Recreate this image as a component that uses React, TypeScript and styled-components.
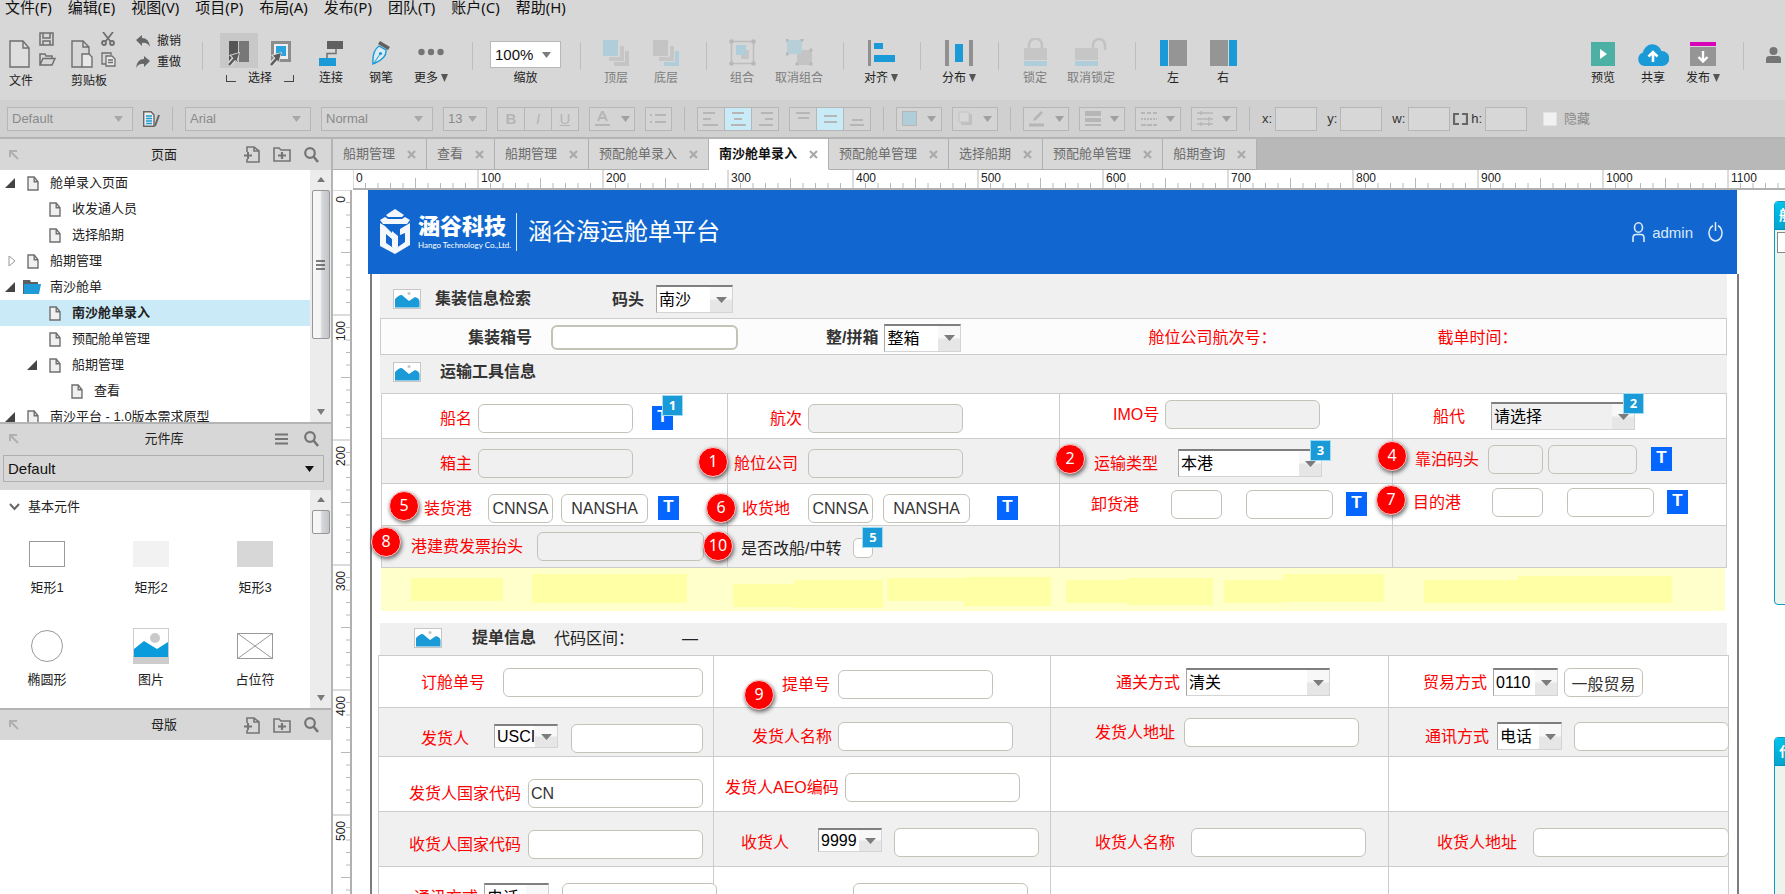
import React, { useLayoutEffect, useRef, useState } from "react";
import styled, { createGlobalStyle } from "styled-components";

const uiFont = `"Noto Sans", "Noto Sans CJK SC", sans-serif`;
const formFont = `"Liberation Sans", "Noto Sans CJK SC", sans-serif`;

const Global = createGlobalStyle`
  *, *::before, *::after { box-sizing: border-box; }
  html, body { margin: 0; height: 100%; overflow: hidden; }
  #root { height: 100%; }
  body { font-family: ${formFont}; color: #222; background: #fff; }
  button, input, select { font: inherit; color: inherit; }
  button { padding: 0; border: 0; background: none; cursor: pointer; }
  svg { display: block; flex: none; }
`;

/* ---------- application frame ---------- */

const Frame = styled.div`
  height: 100vh;
  display: flex;
  flex-direction: column;
  overflow: hidden;
`;

const MenuBar = styled.nav`
  flex: none;
  display: flex;
  align-items: flex-start;
  gap: 16px;
  height: 16px;
  padding-left: 5px;
  background: #d7d7d7;
  color: #111;
  font: 15px/15px ${uiFont};
  white-space: nowrap;

  button { line-height: 15px; }
`;

const ToolBar = styled.div`
  flex: none;
  display: flex;
  height: 84px;
  padding: 17px 4px 0 0;
  background: #d7d7d7;
  color: #222;
  font: 12px/16px ${formFont};
  white-space: nowrap;
`;

const Tool = styled.button<{ $w?: number; $before?: number; $dim?: boolean }>`
  display: flex;
  flex-direction: column;
  align-items: center;
  gap: 2px;
  flex: none;
  width: ${(p) => p.$w ?? 50}px;
  height: 53px;
  margin-left: ${(p) => p.$before ?? 0}px;
  color: ${(p) => (p.$dim ? "#7c7c7c" : "#222")};
`;

const IconBox = styled.span`
  display: flex;
  align-items: flex-end;
  justify-content: center;
  height: 35px;
  padding-bottom: 2px;
`;

const ToolText = styled.span`
  display: flex;
  align-items: center;
  gap: 3px;
`;

const Divider = styled.i<{ $before: number; $after: number }>`
  flex: none;
  width: 1px;
  height: 28px;
  margin: 9px ${(p) => p.$after}px 0 ${(p) => p.$before}px;
  background: #bdbdbd;
`;

const FileGroup = styled.div<{ $before: number; $w: number }>`
  flex: none;
  display: grid;
  grid-template-columns: 24px auto;
  grid-template-rows: 12px 22px 16px;
  align-content: start;
  justify-items: start;
  column-gap: 6px;
  row-gap: 3px;
  width: ${(p) => p.$w}px;
  margin-left: ${(p) => p.$before}px;

  > button:first-child { grid-row: 1 / 3; display: flex; padding-top: 5px; }
  > button { display: flex; align-items: center; }
  > span { grid-column: 1 / 3; }
`;

const History = styled.div`
  flex: none;
  display: flex;
  flex-direction: column;
  gap: 5px;
  width: 66px;

  button { display: flex; align-items: center; gap: 7px; }
`;

const SelectTools = styled.div`
  flex: none;
  display: grid;
  grid-template-columns: 38px 38px;
  align-content: start;
  column-gap: 4px;
  row-gap: 2px;
  margin-right: 6px;
  justify-items: center;

  > div { grid-column: 1 / 3; display: flex; align-items: center; gap: 12px; }
`;

const PointerButton = styled.button<{ $on?: boolean }>`
  display: flex;
  align-items: flex-end;
  justify-content: center;
  width: 38px;
  height: 35px;
  padding-bottom: 2px;
  background: ${(p) => (p.$on ? "#c8c8c8" : "none")};
`;

const Bracket = styled.i<{ $right?: boolean }>`
  width: 10px;
  height: 7px;
  border-bottom: 1px solid #444;
  ${(p) => (p.$right ? "border-right" : "border-left")}: 1px solid #444;
`;

const ZoomBlock = styled.label`
  display: flex;
  flex-direction: column;
  align-items: center;
  gap: 2px;
  width: 71px;
  padding-top: 8px;
`;

const Spacer = styled.span`
  flex: 1;
`;

/* ---------- style bar ---------- */

const StyleBar = styled.div`
  flex: none;
  display: flex;
  align-items: center;
  gap: 10px;
  height: 39px;
  padding-left: 7px;
  background: #d0d0d0;
  border-bottom: 2px solid #b4b4b4;
  color: #8a8a8a;
  font: 13px/16px ${formFont};
`;

const BarPick = styled.span<{ $w: number; $h?: number; $line?: string; $bg?: string; $fg?: string; $size?: number }>`
  flex: none;
  display: grid;
  grid-template-columns: 1fr 18px;
  align-items: center;
  width: ${(p) => p.$w}px;
  height: ${(p) => p.$h ?? 24}px;
  border: 1px solid ${(p) => p.$line ?? "#b6b6b6"};
  background: ${(p) => p.$bg ?? "#d4d4d4"};
  color: ${(p) => p.$fg ?? "#8a8a8a"};
  font-size: ${(p) => p.$size ?? 13}px;

  select {
    grid-area: 1 / 1 / 2 / 3;
    width: 100%;
    height: 100%;
    padding: 0 4px;
    appearance: none;
    border: 0;
    background: none;
  }
  svg { grid-area: 1 / 2; pointer-events: none; }
`;

const BarButton = styled.button<{ $w?: number; $on?: boolean }>`
  flex: none;
  display: flex;
  align-items: center;
  justify-content: space-around;
  width: ${(p) => p.$w ?? 27}px;
  height: 24px;
  border: 1px solid #b6b6b6;
  background: ${(p) => (p.$on ? "#c9ebf8" : "#d4d4d4")};
  color: #b4b4b4;
`;

const Joined = styled.span`
  flex: none;
  display: flex;
  button { width: 28px; }
  button + button { margin-left: -1px; }
  b, i, u { font-size: 15px; font-family: ${formFont}; }
`;

const Tick = styled.i`
  flex: none;
  width: 1px;
  height: 24px;
  margin: 0 2px;
  background: #b8b8b8;
`;

const Coord = styled.label`
  flex: none;
  display: flex;
  align-items: center;
  gap: 3px;
  color: #333;

  input {
    width: 42px;
    height: 24px;
    border: 1px solid #b6b6b6;
    background: #d7d7d7;
  }
`;

const HideBox = styled.label`
  display: flex;
  align-items: center;
  gap: 7px;
  margin-left: 6px;
  white-space: nowrap;

  input {
    appearance: none;
    width: 14px;
    height: 14px;
    margin: 0;
    background: #f1f1f1;
    border: 1px solid #e2e2e2;
  }
`;

/* ---------- left side ---------- */

const Workspace = styled.div`
  flex: 1;
  min-height: 0;
  display: flex;
`;

const Side = styled.aside`
  flex: none;
  display: flex;
  flex-direction: column;
  width: 333px;
  border-right: 2px solid #b4b4b4;
  background: #fff;
  font: 13px/26px ${formFont};
`;

const PaneHead = styled.header<{ $line?: boolean }>`
  flex: none;
  display: grid;
  grid-template-columns: 77px 1fr 77px;
  align-items: center;
  height: ${(p) => (p.$line ? 32 : 31)}px;
  padding: 0 12px 0 9px;
  border-top: ${(p) => (p.$line ? "2px solid #b4b4b4" : "0")};
  background: #d7d7d7;

  h2 { margin: 0; font-size: 13px; font-weight: 400; text-align: center; }
  > div { display: flex; align-items: center; justify-content: flex-end; gap: 13px; }
`;

const Scroller = styled.div<{ $h: number }>`
  flex: none;
  display: flex;
  height: ${(p) => p.$h}px;
  overflow: hidden;
`;

const Tree = styled.ul`
  flex: 1;
  margin: 0;
  padding: 0;
  list-style: none;
`;

const TreeRow = styled.li<{ $level: number; $on?: boolean }>`
  display: grid;
  grid-template-columns: 22px 23px 1fr;
  align-items: center;
  height: 26px;
  padding-left: ${(p) => 5 + p.$level * 22}px;
  background: ${(p) => (p.$on ? "#cbeaf8" : "none")};
  font-weight: ${(p) => (p.$on ? 700 : 400)};
  color: #222;

  span { white-space: nowrap; }
  svg.folder { margin-left: -4px; }
`;

const Bar = styled.div`
  flex: none;
  display: flex;
  flex-direction: column;
  align-items: center;
  width: 21px;
  padding: 7px 0;
  background: #ececec;
  gap: 8px;
`;

const Thumb = styled.i<{ $h: number }>`
  display: flex;
  align-items: center;
  justify-content: center;
  width: 18px;
  height: ${(p) => p.$h}px;
  border: 1px solid #979797;
  border-radius: 2px;
  background: linear-gradient(90deg, #f6f6f6 0 45%, #d6d7da 55%, #c3c4c8);
`;

const LibraryPick = styled.div`
  flex: none;
  height: 36px;
  padding: 1px 7px 8px 3px;
  background: #d7d7d7;
`;

const Library = styled.div`
  flex: 1;
  h3 { display: flex; align-items: center; gap: 8px; height: 34px; margin: 0; padding-left: 9px; font-size: 13px; font-weight: 400; }
`;

const Shapes = styled.div`
  display: grid;
  grid-template-columns: repeat(3, 90px);
  grid-auto-rows: 92px;
  column-gap: 14px;
  padding-left: 2px;
`;

const Shape = styled.button`
  display: flex;
  flex-direction: column;
  align-items: center;
  line-height: 20px;
  > span { display: flex; align-items: center; height: 54px; padding-top: 6px; }
`;

/* ---------- canvas side ---------- */

const Editor = styled.main`
  flex: 1;
  min-width: 0;
  display: flex;
  flex-direction: column;
`;

const Tabs = styled.div`
  flex: none;
  display: flex;
  height: 31px;
  background: #b8b8b8;
  overflow: hidden;
`;

const Tab = styled.div<{ $on?: boolean }>`
  flex: none;
  display: flex;
  align-items: center;
  gap: 12px;
  padding: 0 10px;
  border-right: 1px solid #b0b0b0;
  border-bottom: 1px solid ${(p) => (p.$on ? "#fff" : "#b0b0b0")};
  background: ${(p) => (p.$on ? "#fff" : "#d7d7d7")};
  color: ${(p) => (p.$on ? "#111" : "#6c6c6c")};
  font: ${(p) => (p.$on ? 700 : 400)} 13px/20px ${formFont};
`;

const CanvasGrid = styled.div`
  flex: 1;
  min-height: 0;
  display: grid;
  grid-template: 20px minmax(0, 1fr) / 20px minmax(0, 1fr);
  background: #fff;
  > svg { width: 100%; height: 100%; overflow: hidden; }
`;

const Canvas = styled.div`
  display: flex;
  align-items: flex-start;
  padding-left: 15px;
  overflow: hidden;
`;

const Board = styled.section`
  flex: 1;
  min-width: 1200px;
`;

const Banner = styled.header`
  display: flex;
  align-items: center;
  height: 84px;
  margin-right: 2px;
  padding: 0 14px 0 12px;
  background: #1167cf;
  color: #fff;
`;

const Brand = styled.div`
  display: flex;
  flex-direction: column;
  margin-left: 8px;
  width: 90px;
  white-space: nowrap;
  strong { font-size: 22px; line-height: 26px; font-weight: 900; }
  small { font: 8px/10px "Lato", sans-serif; }
`;

const Product = styled.h1`
  margin: 0 auto 0 8px;
  padding-left: 11px;
  border-left: 1px solid #dbe8f8;
  font-size: 24px;
  line-height: 38px;
  font-weight: 400;
`;

const Account = styled.div`
  display: flex;
  align-items: center;
  gap: 7px;
  font-size: 15px;
  color: #dceafb;
  button { margin-left: 8px; }
`;

const BoardBody = styled.div`
  margin-left: 2px;
  padding: 0 8px 0 6px;
  border: solid #7c7c7c;
  border-width: 0 2px;
  height: 760px;
`;

const Band = styled.div<{ $h: number; $left: number; $boxed?: boolean; $down?: number; $up?: number }>`
  display: flex;
  align-items: center;
  height: ${(p) => p.$h}px;
  margin: 0 2px;
  padding: ${(p) => p.$down ?? 0}px 0 ${(p) => p.$up ?? 0}px ${(p) => p.$left}px;
  background: ${(p) => (p.$boxed ? "#fcfcfc" : "#f0f0f0")};
  border: ${(p) => (p.$boxed ? "1px solid #ccc" : "0")};
  font-size: 16px;
  color: #333;
  white-space: nowrap;
`;

const BandTitle = styled.h2<{ $gap: number }>`
  margin: 0 0 0 ${(p) => p.$gap}px;
  font-size: 16px;
  line-height: 24px;
  font-weight: 700;
`;

const FormGrid = styled.div<{ $cols: number[]; $inset: string }>`
  display: grid;
  grid-template-columns: ${(p) => p.$cols.map((c) => `minmax(0, ${c}fr)`).join(" ")};
  margin: ${(p) => p.$inset};
  border: solid #ccc;
  border-width: 1px 0 0 1px;
`;

const Cell = styled.div<{ $h: number; $left?: number; $top?: number; $shade?: boolean }>`
  position: relative;
  display: flex;
  align-items: flex-start;
  height: ${(p) => p.$h}px;
  padding-left: ${(p) => p.$left ?? 0}px;
  padding-top: ${(p) => p.$top ?? 0}px;
  border: solid #ccc;
  border-width: 0 1px 1px 0;
  background: ${(p) => (p.$shade ? "#f0f0f0" : "#fff")};
`;

const Label = styled.label<{ $gap?: number; $dark?: boolean; $bold?: boolean }>`
  flex: none;
  margin-left: ${(p) => p.$gap ?? 0}px;
  font-size: 16px;
  line-height: 29px;
  font-weight: ${(p) => (p.$bold ? 700 : 400)};
  color: ${(p) => (p.$bold ? "#333" : p.$dark ? "#222" : "#fe0000")};
  white-space: nowrap;
`;

const Field = styled.input<{ $w: number; $gap?: number; $muted?: boolean; $center?: boolean; $strong?: boolean }>`
  flex: none;
  position: relative;
  z-index: 1;
  width: ${(p) => p.$w}px;
  height: ${(p) => (p.$strong ? 25 : 29)}px;
  margin-left: ${(p) => p.$gap ?? 0}px;
  padding: 0 2px;
  border: ${(p) => (p.$strong ? 2 : 1)}px solid #c3c3b8;
  border-radius: 6px;
  background: ${(p) => (p.$muted ? "#f0f0f0" : "#fff")};
  color: #333;
  font-size: 16px;
  text-align: ${(p) => (p.$center ? "center" : "left")};
`;

const CheckHolder = styled.span`
  flex: none;
  position: relative;
  display: flex;
  margin: 4px 0 0 12px;

  input {
    appearance: none;
    width: 20px;
    height: 20px;
    margin: 0;
    border: 1px solid #c3c3b8;
    border-radius: 5px;
    background: #fff;
  }
`;

const Drop = styled.span<{ $w: number; $h?: number; $gap?: number; $muted?: boolean }>`
  flex: none;
  position: relative;
  display: grid;
  grid-template-columns: 1fr 22px;
  width: ${(p) => p.$w}px;
  height: ${(p) => p.$h ?? 28}px;
  margin-left: ${(p) => p.$gap ?? 0}px;
  border: 1px solid #d4d4d4;
  border-top: 2px solid #7f7f7f;
  border-left-color: #a6a6a6;
  background: ${(p) => (p.$muted ? "#f0f0f0" : "#fff")};

  select {
    grid-area: 1 / 1 / 2 / 3;
    width: 100%;
    min-width: 0;
    padding: 0 2px;
    appearance: none;
    border: 0;
    background: none;
    font-size: 16px;
    color: #000;
  }
  > i {
    grid-area: 1 / 2;
    display: flex;
    align-items: center;
    justify-content: center;
    background: linear-gradient(#f8f8f8 0 45%, #e6e6e6 55%);
    pointer-events: none;
  }
`;

const TextMark = styled.span<{ $gap: number }>`
  flex: none;
  position: relative;
  width: 21px;
  height: 24px;
  margin: 2px 0 0 ${(p) => p.$gap}px;
  background: #0466ff;
  color: #fff;
  font: 700 17px/22px ${formFont};
  text-align: center;
`;

const Note = styled.span`
  position: absolute;
  top: -11px;
  right: -10px;
  z-index: 3;
  width: 21px;
  height: 21px;
  border: 1px solid #9fdcf3;
  background: #1a9ad6;
  color: #fff;
  font: 700 13px/19px ${uiFont};
  text-align: center;
`;

const Pin = styled.span<{ $x: number; $y: number }>`
  position: absolute;
  left: ${(p) => p.$x}px;
  top: ${(p) => p.$y}px;
  z-index: 4;
  width: 30px;
  height: 30px;
  border: 1px solid #ffc9c9;
  border-radius: 50%;
  background: #fe0000;
  box-shadow: 1px 2px 4px rgba(0, 0, 0, 0.6);
  color: #fff;
  font: 16px/27px ${uiFont};
  text-align: center;
`;

const YellowStrip = styled.div`
  display: flex;
  height: 43px;
  margin: 0 4px 12px 3px;
  padding-top: 6px;
  background: #ffffcc;
`;

const YellowPatch = styled.i<{ $w: number; $h: number; $gap: number; $top: number }>`
  flex: none;
  width: ${(p) => p.$w}px;
  height: ${(p) => p.$h}px;
  margin: ${(p) => p.$top}px 0 0 ${(p) => p.$gap}px;
  background: #ffffa6;
`;

const Offstage = styled.div`
  flex: none;
  width: 46px;
  padding: 11px 0 0 35px;
  overflow: hidden;
`;

const Dialog = styled.div<{ $h: number; $after?: number }>`
  width: 200px;
  height: ${(p) => p.$h}px;
  margin-bottom: ${(p) => p.$after ?? 0}px;
  border: 1px solid #0a9cc4;
  border-radius: 4px;
  background: #edf4ee;
  overflow: hidden;
  color: #fff;
  font: 700 14px/26px ${formFont};

  header { height: 28px; padding-left: 4px; background: linear-gradient(#00c4ec, #00a4cd); border-bottom: 1px solid #0090b8; }
  input { display: block; width: 160px; height: 21px; margin: 2px; border: 1px solid #888; background: #fff; }
  textarea { display: block; width: 160px; height: 60px; margin: 76px 0 0 10px; border: 2px solid #888; background: #d8ddd9; resize: none; }
`;

/* ---------- small drawings ---------- */

const Caret = ({ fill = "#7c7c7c", w = 9 }: { fill?: string; w?: number }) => (
  <svg width={w} height="6" viewBox="0 0 10 6" preserveAspectRatio="none"><path d="M0 0H10L5 6Z" fill={fill} /></svg>
);
const CaretUp = () => <svg width="8" height="5" viewBox="0 0 8 5"><path d="M0 5L4 0L8 5Z" fill="#777" /></svg>;

const TallCaret = () => <svg width="7" height="8" viewBox="0 0 7 8"><path d="M0 0H7L3.500 8Z" fill="#555" /></svg>;

const Page = ({ w = 12, h = 15 }: { w?: number; h?: number }) => (
  <svg width={w} height={h} viewBox={`0 0 ${w} ${h}`} fill="none" stroke="#6f6f6f" strokeWidth="1.4">
    <path d={`M1 1H${w * 0.6}L${w - 1} ${w * 0.4 + 1}V${h - 1}H1Z`} fill="#f0f0f0" />
    <path d={`M${w * 0.6} 1V${w * 0.4 + 1}H${w - 1}`} />
  </svg>
);

const NewDoc = () => (
  <svg width="21" height="28" viewBox="0 0 21 28" fill="none" stroke="#6f6f6f" strokeWidth="1.4">
    <path d="M1 1H14L20 8V27H1Z" fill="#dedede" /><path d="M14 1V8H20" />
  </svg>
);

const FolderIcon = () => (
  <svg className="folder" width="18" height="14" viewBox="0 0 18 14">
    <path d="M0 0H7L8 2H15V5H0Z" fill="#5f5f5f" /><path d="M0 4H2V14H0Z" fill="#5f5f5f" /><path d="M1 4H18L16 14H1Z" fill="#1f9bd7" />
  </svg>
);

const Corner = () => (
  <svg width="10" height="10" viewBox="0 0 10 10" fill="none" stroke="#b0b0b0" strokeWidth="2">
    <path d="M1 7V1H8M1 1L9 9" />
  </svg>
);
const AddPage = () => (
  <svg width="16" height="17" viewBox="0 0 16 17" fill="none" stroke="#757575" strokeWidth="1.6">
    <path d="M3 6V1H10L15 5V16H3V13M10 1V5H15" /><path d="M0 9.500H8M4 6V13" strokeWidth="2" />
  </svg>
);
const AddFolder = () => (
  <svg width="18" height="15" viewBox="0 0 18 15" fill="none" stroke="#757575" strokeWidth="1.6">
    <path d="M1 14V1H6L8 3H17V14Z" /><path d="M5 8.500H13M9 5V12" strokeWidth="2.200" />
  </svg>
);
const Search = () => (
  <svg width="15" height="16" viewBox="0 0 15 16" fill="none" stroke="#757575" strokeWidth="2.200">
    <circle cx="6" cy="6" r="4.800" /><path d="M9.500 9.500L14 15" strokeWidth="2.600" />
  </svg>
);
const Lines = () => (
  <svg width="18" height="12" viewBox="0 0 18 12"><path d="M2 1.500H15M2 6H15M2 10.500H15" stroke="#757575" strokeWidth="2.200" /></svg>
);
const Picture = () => (
  <svg width="28" height="20" viewBox="0 0 28 20">
    <rect x=".5" y=".5" width="27" height="19" fill="#fff" stroke="#c6c6c6" />
    <circle cx="16" cy="4.500" r="1.600" fill="#c8c8c8" />
    <path d="M2 18.500V10Q8 4 10 7L16 12L22 8Q26 9 26.500 12V18.500Z" fill="#1a9ad6" />
  </svg>
);
const Cross = () => (
  <svg width="9" height="9" viewBox="0 0 9 9"><path d="M1 1L8 8M8 1L1 8" stroke="#aaa" strokeWidth="2.200" /></svg>
);

const SaveIcon = () => (
  <svg width="15" height="14" viewBox="0 0 15 14" fill="none" stroke="#6f6f6f" strokeWidth="1.500">
    <path d="M1 1H14V13H1ZM4 1V6H11V1M4 13V9H11V13" />
  </svg>
);
const OpenIcon = () => (
  <svg width="17" height="13" viewBox="0 0 17 13" fill="none" stroke="#6f6f6f" strokeWidth="1.500">
    <path d="M1 12V1H6L7 3H13V5.500M1 12L4 5.500H16L13 12Z" />
  </svg>
);
const PasteIcon = () => (
  <svg width="22" height="28" viewBox="0 0 22 28" fill="none" stroke="#6f6f6f" strokeWidth="1.400">
    <path d="M11 27H1V1H12L18 7V14M12 1V7H18" /><path d="M11 14H18L21 17V27H11Z" fill="#e8e8e8" />
  </svg>
);
const CutIcon = () => (
  <svg width="14" height="14" viewBox="0 0 14 14" fill="none" stroke="#6f6f6f" strokeWidth="1.800">
    <path d="M2 0L9.500 9.500M12 0L4.500 9.500" /><circle cx="3" cy="11" r="2" /><circle cx="11" cy="11" r="2" />
  </svg>
);
const CopyIcon = () => (
  <svg width="15" height="15" viewBox="0 0 15 15" fill="none" stroke="#6f6f6f" strokeWidth="1.300">
    <path d="M5 12H1V1H10V3" /><path d="M5 4H11L14 7V14H5ZM7 8H12M7 10.500H12" fill="#e8e8e8" />
  </svg>
);
const Arrow = ({ flip }: { flip?: boolean }) => (
  <svg width="14" height="12" viewBox="0 0 14 12">
    <path transform={flip ? "matrix(-1 0 0 1 14 0)" : undefined} d="M0 5L6 0V3Q13 3 14 12Q11 7 6 8V11Z" fill="#666" />
  </svg>
);
const PointerShape = () => (
  <g>
    <path d="M1 24L7 17" stroke="#dcdcdc" strokeWidth="5" /><path d="M1 14L12 11L9 22Z" fill="#dcdcdc" />
    <path d="M1 24L8 16" stroke="#5a5a5a" strokeWidth="2.400" /><path d="M3 14.500L11 12L8.500 20.500Z" fill="#5a5a5a" />
  </g>
);
const PointerA = () => (
  <svg width="22" height="25" viewBox="0 0 22 25">
    <path d="M1 0H10V21H1Z" fill="#555" /><path d="M11 0H21V21H11Z" fill="#777" />
    <PointerShape />
  </svg>
);
const PointerB = () => (
  <svg width="22" height="25" viewBox="0 0 22 25">
    <rect x="2.500" y="1.500" width="17" height="18" fill="#eee" stroke="#8c8c8c" strokeWidth="3" />
    <rect x="6" y="5" width="10" height="10" fill="#2ba3dc" />
    <PointerShape />
  </svg>
);
const ConnectIcon = () => (
  <svg width="24" height="25" viewBox="0 0 24 25">
    <path d="M8 0H24V8H8Z" fill="#606060" /><path d="M17 8V12.500H8V17" fill="none" stroke="#707070" strokeWidth="1.500" />
    <path d="M0 17H17V25H0Z" fill="#1a9ad6" />
  </svg>
);
const PenIcon = () => (
  <svg width="18" height="25" viewBox="0 0 18 25" fill="none">
    <path d="M8 0L18 6L16 9L6 3Z" fill="#606060" />
    <path d="M7 5L14 9Q15 17 3 22L1 23Q0 10 7 5Z" fill="#dcebf2" stroke="#1a9ad6" strokeWidth="1.400" />
    <path d="M2 22L8 13" stroke="#1a9ad6" /><circle cx="8.500" cy="12.500" r="1.600" fill="#1a9ad6" />
  </svg>
);
const DotsIcon = () => (
  <svg width="26" height="28" viewBox="0 0 26 28" fill="#757575"><circle cx="3.500" cy="14" r="3.200" /><circle cx="13" cy="14" r="3.200" /><circle cx="22.500" cy="14" r="3.200" /></svg>
);
const LayerIcon = ({ front }: { front?: boolean }) => (
  <svg width="26" height="26" viewBox="0 0 26 26">
    <path d="M11 11H26V26H11Z" fill={front ? "#c4c4c4" : "#b0cdda"} />
    <path d="M5 5H22V22H5Z" fill="#d7d7d7" /><path d="M6 6H21V21H6Z" fill="#c6c6c6" />
    <path d="M0 0H17V17H0Z" fill="#d7d7d7" /><path d="M0 0H15V16H0Z" fill={front ? "#b0cdda" : "#c4c4c4"} />
  </svg>
);
const GroupIcon = () => (
  <svg width="27" height="27" viewBox="0 0 27 27">
    <rect x="2.500" y="2.500" width="22" height="22" fill="none" stroke="#bdbdbd" strokeWidth="1.500" />
    <path d="M12 11H20V20H12Z" fill="#c6c6c6" /><path d="M7 6H17V16H7Z" fill="#b0cdda" />
    {[2.5, 24.5].map((x) => [2.5, 24.5].map((y) => <circle key={`${x}-${y}`} cx={x} cy={y} r="2.300" fill="#b8b8b8" />))}
  </svg>
);
const UngroupIcon = () => (
  <svg width="27" height="27" viewBox="0 0 27 27">
    <path d="M11 11H26V26H11Z" fill="#c4c4c4" /><path d="M1 1H16V15H1Z" fill="#b7cfd9" />
    {[[1, 1], [16, 1], [1, 15], [25, 11], [11, 25], [25, 25]].map(([x, y]) => <circle key={`${x}-${y}`} cx={x} cy={y} r="1.700" fill="#b8b8b8" />)}
  </svg>
);
const AlignIcon = () => (
  <svg width="27" height="26" viewBox="0 0 27 26"><path d="M0 0H3V26H0Z" fill="#909090" /><path d="M6 3H15V9H6ZM6 15H27V22H6Z" fill="#1a9ad6" /></svg>
);
const SpreadIcon = () => (
  <svg width="28" height="26" viewBox="0 0 28 26"><path d="M0 0H4V26H0ZM24 0H28V26H24Z" fill="#909090" /><path d="M10 4H18V22H10Z" fill="#1a9ad6" /></svg>
);
const LockIcon = ({ open }: { open?: boolean }) => (
  <svg width={open ? 32 : 23} height="28" viewBox={open ? "0 0 32 28" : "0 0 23 28"}>
    <path d={open ? "M18 11V7A6 6 0 0 1 30 7V12" : "M5 11V7A6 6 0 0 1 18 7V11"} fill="none" stroke="#c2c2c2" strokeWidth="2.500" />
    <path d="M0 10H23V22H0Z" fill="#c6c6c6" /><path d="M0 23H23V28H0Z" fill="#b0cdda" />
  </svg>
);
const PaneIcon = ({ right }: { right?: boolean }) => (
  <svg width="27" height="26" viewBox="0 0 27 26">
    <path d={right ? "M0 0H18V26H0Z" : "M9 0H27V26H9Z"} fill="#959595" />
    <path d={right ? "M19 0H27V26H19Z" : "M0 0H8V26H0Z"} fill="#1a9ad6" />
  </svg>
);
const PlayIcon = () => (
  <svg width="24" height="24" viewBox="0 0 24 24"><path d="M0 0H24V24H0Z" fill="#4cb1a4" /><path d="M9 7L16 12L9 17Z" fill="#fff" /></svg>
);
const CloudIcon = () => (
  <svg width="32" height="24" viewBox="0 0 32 24">
    <path d="M7 24A7 7 0 0 1 6 10.500A9.500 9.500 0 0 1 24.500 9A7.500 7.500 0 0 1 25 24Z" fill="#1a9ad6" />
    <path d="M16 20V10M11.500 14.500L16 10L20.500 14.500" fill="none" stroke="#fff" strokeWidth="2.600" />
  </svg>
);
const PublishIcon = () => (
  <svg width="26" height="24" viewBox="0 0 26 24">
    <path d="M0 0H26V4H0Z" fill="#d805b8" /><path d="M0 5H26V24H0Z" fill="#959595" />
    <path d="M13 9V19M8.500 15L13 19.500L17.500 15" fill="none" stroke="#fff" strokeWidth="2.400" />
  </svg>
);
const PersonIcon = () => (
  <svg width="15" height="19" viewBox="0 0 15 19" fill="#757575"><circle cx="7.500" cy="4" r="4" /><path d="M0 16V12Q0 9 3.500 9H11.500Q15 9 15 12V16Z" /></svg>
);
const StyleSheetIcon = () => (
  <svg width="17" height="16" viewBox="0 0 17 16">
    <path d="M.7.7H8L11 4V15.300H.7Z" fill="#eee" stroke="#666" strokeWidth="1.400" />
    <path d="M3 5H9M3 7.500H9M3 10H9M3 12.500H9" stroke="#1a9ad6" strokeWidth="1.500" /><path d="M16 4L12 15" stroke="#666" strokeWidth="2" />
  </svg>
);
const Strokes = ({ d }: { d: string }) => (
  <svg width="17" height="16" viewBox="0 0 17 16"><path d={d} fill="none" stroke="#b6b6b6" strokeWidth="2" /></svg>
);
const Emblem = () => (
  <svg width="30" height="46" viewBox="0 0 30 46" fill="#f4f8fd">
    <path d="M15 0L24 6L22 8H8L6 6Z" /><path d="M0 11L5 8L8 10H22L25 8L30 11L27 15H3Z" />
    <path d="M0 14L5 17L12 24V30L6 25V34L15 40V45L0 37Z" /><path d="M12 22L18 27V38L15 41L12 38Z" />
    <path d="M30 14V36L15 45V40L25 33V24L20 26V20Z" />
  </svg>
);

/* ---------- rulers ---------- */

const unit = 125;

function useLength(axis: "clientWidth" | "clientHeight") {
  const ref = useRef<SVGSVGElement>(null);
  const [length, setLength] = useState(0);
  useLayoutEffect(() => {
    const el = ref.current!;
    const read = () => setLength(el[axis]);
    read();
    const watcher = new ResizeObserver(read);
    watcher.observe(el);
    return () => watcher.disconnect();
  }, [axis]);
  return { ref, length };
}

const markList = (length: number) => Array.from({ length: Math.ceil((length * 10) / unit) }, (_, i) => i);
const markStart = (i: number) => (i % 10 === 0 ? 0 : i % 5 === 0 ? 8 : 13);

function RulerX() {
  const { ref, length } = useLength("clientWidth");
  return (
    <svg ref={ref} fontFamily="Liberation Sans" fontSize="12" fill="#222">
      <path d={`M0 19H${length}`} stroke="#b0b0b0" strokeWidth="2" />
      {markList(length).map((i) => (
        <g key={i}>
          <path d={`M${(i * unit) / 10} ${markStart(i)}V19`} stroke="#b8b8b8" />
          {i % 10 === 0 && <text x={(i * unit) / 10 + 3} y="12">{i * 10}</text>}
        </g>
      ))}
    </svg>
  );
}

function RulerY() {
  const { ref, length } = useLength("clientHeight");
  return (
    <svg ref={ref} fontFamily="Liberation Sans" fontSize="12" fill="#222">
      <path d={`M18 0V${length}`} stroke="#b0b0b0" strokeWidth="2" />
      {markList(length).map((i) => {
        const y = (i * unit) / 10;
        return (
          <g key={i}>
            <path d={`M${markStart(i)} ${y}H18`} stroke="#b8b8b8" />
            {i % 10 === 0 && <text textAnchor="end" transform={`translate(12 ${y + 6}) rotate(-90)`}>{i * 10}</text>}
          </g>
        );
      })}
    </svg>
  );
}

/* ---------- composite parts ---------- */

function Choice({ id, value, w, h, gap, muted, note }: { id: string; value: string; w: number; h?: number; gap?: number; muted?: boolean; note?: number }) {
  return (
    <Drop $w={w} $h={h} $gap={gap} $muted={muted}>
      <select id={id} defaultValue={value}><option>{value}</option></select>
      <i><Caret w={11} /></i>
      {note && <Note>{note}</Note>}
    </Drop>
  );
}

function BarSelect({ label, value, w }: { label: string; value: string; w: number }) {
  return (
    <BarPick $w={w}>
      <select aria-label={label} defaultValue={value}><option>{value}</option></select>
      <Caret fill="#a8a8a8" />
    </BarPick>
  );
}

const BarMenu = ({ label, children }: { label: string; children: React.ReactNode }) => (
  <BarButton $w={46} aria-label={label}>{children}<Caret fill="#a0a0a0" /></BarButton>
);

const Expanded = () => <svg width="10" height="10" viewBox="0 0 10 10"><path d="M10 0V10H0Z" fill="#444" /></svg>;
const Collapsed = () => <svg width="11" height="12" viewBox="0 0 11 12"><path d="M4 1L10 6L4 11Z" fill="#fff" stroke="#999" /></svg>;

const treeRows: { text: string; level: number; state?: "open" | "closed"; folder?: boolean; on?: boolean }[] = [
  { text: "舱单录入页面", level: 0, state: "open" },
  { text: "收发通人员", level: 1 },
  { text: "选择船期", level: 1 },
  { text: "船期管理", level: 0, state: "closed" },
  { text: "南沙舱单", level: 0, state: "open", folder: true },
  { text: "南沙舱单录入", level: 1, on: true },
  { text: "预配舱单管理", level: 1 },
  { text: "船期管理", level: 1, state: "open" },
  { text: "查看", level: 2 },
  { text: "南沙平台 - 1.0版本需求原型", level: 0, state: "open" },
];

const shapes: { text: string; art: React.ReactNode }[] = [
  { text: "矩形1", art: <svg width="36" height="26"><rect x=".5" y=".5" width="35" height="25" fill="#fff" stroke="#999" /></svg> },
  { text: "矩形2", art: <svg width="36" height="26"><rect width="36" height="26" fill="#f2f2f2" /></svg> },
  { text: "矩形3", art: <svg width="36" height="26"><rect width="36" height="26" fill="#d7d7d7" /></svg> },
  { text: "椭圆形", art: <svg width="32" height="32"><circle cx="16" cy="16" r="15.500" fill="#fff" stroke="#999" /></svg> },
  {
    text: "图片",
    art: (
      <svg width="36" height="36" viewBox="0 0 36 36">
        <rect x=".5" y=".5" width="35" height="35" fill="#fff" stroke="#ccc" /><path d="M1 29H35V35H1Z" fill="#ccc" />
        <circle cx="22" cy="10" r="5" fill="#c9c9c9" /><path d="M1 21L11 13L24 21L35 14V29H1Z" fill="#0a9bdc" />
      </svg>
    ),
  },
  { text: "占位符", art: <svg width="36" height="26"><rect x=".5" y=".5" width="35" height="25" fill="#fff" stroke="#999" /><path d="M0 0L36 26M36 0L0 26" stroke="#999" /></svg> },
];

const tabs = ["船期管理", "查看", "船期管理", "预配舱单录入", "南沙舱单录入", "预配舱单管理", "选择船期", "预配舱单管理", "船期查询"];

const patches = [
  [92, 23, 30, 4], [155, 29, 29, 0], [61, 23, 46, 10], [89, 28, 0, 6], [77, 23, 4, 4], [87, 29, 0, 3],
  [61, 23, 15, 6], [86, 27, 0, 4], [59, 23, 11, 6], [101, 28, 0, 0], [94, 23, 40, 6], [154, 27, 0, 2],
];

function Toolbars() {
  return (
    <>
      <MenuBar>
        {["文件(F)", "编辑(E)", "视图(V)", "项目(P)", "布局(A)", "发布(P)", "团队(T)", "账户(C)", "帮助(H)"].map((t) => (
          <button key={t}>{t}</button>
        ))}
      </MenuBar>
      <ToolBar>
        <FileGroup $before={9} $w={62}>
          <button aria-label="新建"><NewDoc /></button>
          <button aria-label="保存"><SaveIcon /></button>
          <button aria-label="打开"><OpenIcon /></button>
          <span>文件</span>
        </FileGroup>
        <FileGroup $before={0} $w={65}>
          <button aria-label="粘贴"><PasteIcon /></button>
          <button aria-label="剪切"><CutIcon /></button>
          <button aria-label="复制"><CopyIcon /></button>
          <span>剪贴板</span>
        </FileGroup>
        <History>
          <button><Arrow />撤销</button>
          <button><Arrow flip />重做</button>
        </History>
        <Divider $before={0} $after={17} />
        <SelectTools>
          <PointerButton $on aria-label="相交选择"><PointerA /></PointerButton>
          <PointerButton aria-label="包含选择"><PointerB /></PointerButton>
          <div><Bracket />选择<Bracket $right /></div>
        </SelectTools>
        <Tool><IconBox><ConnectIcon /></IconBox><ToolText>连接</ToolText></Tool>
        <Tool><IconBox><PenIcon /></IconBox><ToolText>钢笔</ToolText></Tool>
        <Tool><IconBox><DotsIcon /></IconBox><ToolText>更多<TallCaret /></ToolText></Tool>
        <Divider $before={16} $after={17} />
        <ZoomBlock>
          <BarPick $w={71} $h={27} $line="#b8b8b8" $bg="#fff" $fg="#111" $size={15}>
            <select defaultValue="100%"><option>100%</option></select>
            <Caret />
          </BarPick>
          缩放
        </ZoomBlock>
        <Divider $before={19} $after={10} />
        <Tool $dim><IconBox><LayerIcon front /></IconBox><ToolText>顶层</ToolText></Tool>
        <Tool $dim><IconBox><LayerIcon /></IconBox><ToolText>底层</ToolText></Tool>
        <Divider $before={15} $after={10} />
        <Tool $dim><IconBox><GroupIcon /></IconBox><ToolText>组合</ToolText></Tool>
        <Tool $dim $before={7}><IconBox><UngroupIcon /></IconBox><ToolText>取消组合</ToolText></Tool>
        <Divider $before={19} $after={12} />
        <Tool><IconBox><AlignIcon /></IconBox><ToolText>对齐<TallCaret /></ToolText></Tool>
        <Divider $before={14} $after={13} />
        <Tool><IconBox><SpreadIcon /></IconBox><ToolText>分布<TallCaret /></ToolText></Tool>
        <Divider $before={14} $after={11} />
        <Tool $dim><IconBox><LockIcon /></IconBox><ToolText>锁定</ToolText></Tool>
        <Tool $dim $before={6}><IconBox><LockIcon open /></IconBox><ToolText>取消锁定</ToolText></Tool>
        <Divider $before={19} $after={12} />
        <Tool><IconBox><PaneIcon /></IconBox><ToolText>左</ToolText></Tool>
        <Tool><IconBox><PaneIcon right /></IconBox><ToolText>右</ToolText></Tool>
        <Spacer />
        <Tool><IconBox><PlayIcon /></IconBox><ToolText>预览</ToolText></Tool>
        <Tool><IconBox><CloudIcon /></IconBox><ToolText>共享</ToolText></Tool>
        <Tool><IconBox><PublishIcon /></IconBox><ToolText>发布<TallCaret /></ToolText></Tool>
        <Divider $before={15} $after={22} />
        <Tool $w={15} aria-label="账户"><IconBox><PersonIcon /></IconBox></Tool>
      </ToolBar>
      <StyleBar>
        <BarSelect label="样式" value="Default" w={126} />
        <button aria-label="样式管理"><StyleSheetIcon /></button>
        <Tick />
        <BarSelect label="字体" value="Arial" w={126} />
        <BarSelect label="字重" value="Normal" w={112} />
        <BarSelect label="字号" value="13" w={44} />
        <Joined>
          <BarButton aria-label="粗体"><b>B</b></BarButton>
          <BarButton aria-label="斜体"><i>I</i></BarButton>
          <BarButton aria-label="下划线"><u>U</u></BarButton>
        </Joined>
        <BarMenu label="文字颜色"><Strokes d="M3 10L7 1H8L12 10M5 7H10M0 14H15" /></BarMenu>
        <BarButton aria-label="项目符号"><Strokes d="M0 4H2M5 4H16M0 11H2M5 11H16" /></BarButton>
        <Tick />
        <Joined>
          <BarButton aria-label="左对齐"><Strokes d="M0 2H12M0 8H8M0 14H15" /></BarButton>
          <BarButton $on aria-label="居中"><Strokes d="M2 2H14M4 8H12M1 14H16" /></BarButton>
          <BarButton aria-label="右对齐"><Strokes d="M4 2H16M8 8H16M2 14H16" /></BarButton>
        </Joined>
        <Joined>
          <BarButton aria-label="顶端"><Strokes d="M1 2H15M3 7H14" /></BarButton>
          <BarButton $on aria-label="中部"><Strokes d="M2 5H15M2 11H15" /></BarButton>
          <BarButton aria-label="底端"><Strokes d="M3 9H14M1 14H15" /></BarButton>
        </Joined>
        <Tick />
        <BarMenu label="填充"><svg width="15" height="15"><rect x=".5" y=".5" width="14" height="14" fill="#b0cdda" stroke="#b6b6b6" /></svg></BarMenu>
        <BarMenu label="阴影"><svg width="15" height="15"><path d="M3 3H14V14H3Z" fill="#c0c0c0" /><path d="M1 1H11V11H1Z" fill="#d7d7d7" stroke="#c4c4c4" /></svg></BarMenu>
        <Tick />
        <BarMenu label="线段颜色"><svg width="17" height="16" viewBox="0 0 17 16"><path d="M4 10L5 7L12 0L14 2L7 9Z" fill="#b6b6b6" /><path d="M0 14H15" stroke="#b6b6b6" strokeWidth="3" /></svg></BarMenu>
        <BarMenu label="线宽"><svg width="16" height="15"><path d="M0 0H16V5H0ZM0 7H16V11H0ZM0 13H16V15H0Z" fill="#b6b6b6" /></svg></BarMenu>
        <BarMenu label="线型"><svg width="16" height="15"><path d="M0 2H16" stroke="#b6b6b6" strokeDasharray="4 2" strokeWidth="2" /><path d="M0 8H16" stroke="#b6b6b6" strokeDasharray="2 1" strokeWidth="2" /><path d="M0 14H16" stroke="#b6b6b6" strokeDasharray="5 1" strokeWidth="2" /></svg></BarMenu>
        <BarMenu label="箭头"><svg width="16" height="15" fill="none" stroke="#b6b6b6"><path d="M0 2H16M4 0V4M0 8H16M12 6V10M0 13H16M4 11V15M12 11V15" strokeWidth="1.500" /></svg></BarMenu>
        <Tick />
        <Coord>x:<input /></Coord>
        <Coord>y:<input /></Coord>
        <Coord>w:<input /><svg width="15" height="12" viewBox="0 0 15 12"><path d="M6 1H1V11H6M9 1H14V11H9" fill="none" stroke="#666" strokeWidth="2.200" /></svg>h:<input aria-label="h" /></Coord>
        <HideBox><input type="checkbox" />隐藏</HideBox>
      </StyleBar>
    </>
  );
}

function LeftPanels() {
  return (
    <Side>
      <PaneHead>
        <Corner /><h2>页面</h2>
        <div><AddPage /><AddFolder /><Search /></div>
      </PaneHead>
      <Scroller $h={252}>
        <Tree>
          {treeRows.map((r, i) => (
            <TreeRow key={i} $level={r.level} $on={r.on}>
              <div>{r.state === "open" ? <Expanded /> : r.state === "closed" ? <Collapsed /> : null}</div>
              {r.folder ? <FolderIcon /> : <Page />}
              <span>{r.text}</span>
            </TreeRow>
          ))}
        </Tree>
        <Bar>
          <CaretUp />
          <Thumb $h={149}><svg width="9" height="10"><path d="M0 1H9M0 5H9M0 9H9" stroke="#555" strokeWidth="1.500" /></svg></Thumb>
          <Spacer />
          <Caret w={8} />
        </Bar>
      </Scroller>
      <PaneHead $line>
        <Corner /><h2>元件库</h2>
        <div><Lines /><Search /></div>
      </PaneHead>
      <LibraryPick>
        <BarPick $w={321} $h={27} $line="#b0b0b0" $bg="#d7d7d7" $fg="#111" $size={15}>
          <select aria-label="元件库" defaultValue="Default"><option>Default</option></select>
          <Caret fill="#111" />
        </BarPick>
      </LibraryPick>
      <Scroller $h={218}>
        <Library>
          <h3>
            <svg width="11" height="8" viewBox="0 0 11 8"><path d="M1 1L5.500 6L10 1" fill="none" stroke="#666" strokeWidth="2" /></svg>
            基本元件
          </h3>
          <Shapes>
            {shapes.map((s) => <Shape key={s.text}><span>{s.art}</span>{s.text}</Shape>)}
          </Shapes>
        </Library>
        <Bar>
          <CaretUp />
          <Thumb $h={24} />
          <Spacer />
          <Caret w={8} />
        </Bar>
      </Scroller>
      <PaneHead $line>
        <Corner /><h2>母版</h2>
        <div><AddPage /><AddFolder /><Search /></div>
      </PaneHead>
    </Side>
  );
}

function TransportForm() {
  return (
    <FormGrid $inset="0 2px 0 3px" $cols={[346, 332, 333, 334]}>
      <Cell $h={45} $left={58} $top={10}>
        <Label htmlFor="ship">船名</Label><Field id="ship" $w={155} $gap={6} />
        <TextMark $gap={19}>T<Note>1</Note></TextMark>
      </Cell>
      <Cell $h={45} $left={42} $top={10}>
        <Label htmlFor="voyage">航次</Label><Field id="voyage" $w={155} $gap={6} $muted />
      </Cell>
      <Cell $h={45} $left={53} $top={6}>
        <Label htmlFor="imo">IMO号</Label><Field id="imo" $w={155} $gap={6} $muted />
      </Cell>
      <Cell $h={45} $left={40} $top={8}>
        <Label htmlFor="agent">船代</Label><Choice id="agent" value="请选择" w={144} gap={26} muted note={2} />
      </Cell>

      <Cell $h={45} $left={58} $top={10} $shade>
        <Label htmlFor="owner">箱主</Label><Field id="owner" $w={155} $gap={6} $muted />
      </Cell>
      <Cell $h={45} $left={6} $top={10} $shade>
        <Pin $x={-30} $y={8}>1</Pin>
        <Label htmlFor="slot">舱位公司</Label><Field id="slot" $w={155} $gap={10} $muted />
      </Cell>
      <Cell $h={45} $left={34} $top={10} $shade>
        <Pin $x={-5} $y={5}>2</Pin>
        <Label htmlFor="kind">运输类型</Label><Choice id="kind" value="本港" w={144} gap={20} note={3} />
      </Cell>
      <Cell $h={45} $left={22} $top={6} $shade>
        <Pin $x={-16} $y={2}>4</Pin>
        <Label htmlFor="berth">靠泊码头</Label><Field id="berth" $w={55} $gap={9} $muted />
        <Field aria-label="靠泊码头名称" $w={89} $gap={5} $muted /><TextMark $gap={14}>T</TextMark>
      </Cell>

      <Cell $h={42} $left={42} $top={10}>
        <Pin $x={7} $y={7}>5</Pin>
        <Label htmlFor="load">装货港</Label><Field id="load" $w={65} $gap={16} $center defaultValue="CNNSA" />
        <Field aria-label="装货港名称" $w={87} $gap={8} $center defaultValue="NANSHA" /><TextMark $gap={10}>T</TextMark>
      </Cell>
      <Cell $h={42} $left={14} $top={10}>
        <Pin $x={-22} $y={9}>6</Pin>
        <Label htmlFor="receive">收货地</Label><Field id="receive" $w={65} $gap={18} $center defaultValue="CNNSA" />
        <Field aria-label="收货地名称" $w={87} $gap={10} $center defaultValue="NANSHA" /><TextMark $gap={27}>T</TextMark>
      </Cell>
      <Cell $h={42} $left={31} $top={6}>
        <Label htmlFor="unload">卸货港</Label><Field id="unload" $w={51} $gap={32} />
        <Field aria-label="卸货港名称" $w={87} $gap={24} /><TextMark $gap={13}>T</TextMark>
      </Cell>
      <Cell $h={42} $left={20} $top={4}>
        <Pin $x={-17} $y={1}>7</Pin>
        <Label htmlFor="dest">目的港</Label><Field id="dest" $w={51} $gap={31} />
        <Field aria-label="目的港名称" $w={87} $gap={24} /><TextMark $gap={13}>T</TextMark>
      </Cell>

      <Cell $h={42} $left={29} $top={6} $shade>
        <Pin $x={-11} $y={1}>8</Pin>
        <Label htmlFor="invoice">港建费发票抬头</Label><Field id="invoice" $w={167} $gap={14} $muted />
      </Cell>
      <Cell $h={42} $left={13} $top={8} $shade>
        <Pin $x={-25} $y={5}>10</Pin>
        <Label htmlFor="transfer" $dark>是否改船/中转</Label>
        <CheckHolder><input id="transfer" type="checkbox" /><Note>5</Note></CheckHolder>
      </Cell>
      <Cell $h={42} $shade />
      <Cell $h={42} $shade />
    </FormGrid>
  );
}

function BillForm() {
  return (
    <FormGrid $inset="0" $cols={[335, 337, 338, 340]}>
      <Cell $h={52} $left={42} $top={12}>
        <Label htmlFor="booking">订舱单号</Label><Field id="booking" $w={200} $gap={18} />
      </Cell>
      <Cell $h={52} $left={68} $top={14}>
        <Pin $x={30} $y={24}>9</Pin>
        <Label htmlFor="bill">提单号</Label><Field id="bill" $w={155} $gap={8} />
      </Cell>
      <Cell $h={52} $left={65} $top={12}>
        <Label htmlFor="customs">通关方式</Label><Choice id="customs" value="清关" w={144} gap={6} />
      </Cell>
      <Cell $h={52} $left={34} $top={12}>
        <Label htmlFor="trade">贸易方式</Label><Choice id="trade" value="0110" w={65} gap={6} />
        <Field aria-label="贸易方式名称" $w={79} $gap={6} $center defaultValue="一般贸易" />
      </Cell>

      <Cell $h={49} $left={42} $top={16} $shade>
        <Label htmlFor="shipper">发货人</Label><Choice id="shipper" value="USCI" w={64} h={24} gap={25} />
        <Field aria-label="发货人代码" $w={132} $gap={13} />
      </Cell>
      <Cell $h={49} $left={38} $top={14} $shade>
        <Label htmlFor="shipperName">发货人名称</Label><Field id="shipperName" $w={175} $gap={6} />
      </Cell>
      <Cell $h={49} $left={44} $top={10} $shade>
        <Label htmlFor="shipperAddr">发货人地址</Label><Field id="shipperAddr" $w={175} $gap={9} />
      </Cell>
      <Cell $h={49} $left={36} $top={14} $shade>
        <Label htmlFor="contact">通讯方式</Label><Choice id="contact" value="电话" w={65} gap={8} />
        <Field aria-label="通讯号码" $w={155} $gap={12} />
      </Cell>

      <Cell $h={55} $left={30} $top={22}>
        <Label htmlFor="shipperCountry">发货人国家代码</Label><Field id="shipperCountry" $w={175} $gap={7} defaultValue="CN" />
      </Cell>
      <Cell $h={55} $left={11} $top={16}>
        <Label htmlFor="aeo">发货人AEO编码</Label><Field id="aeo" $w={175} $gap={6} />
      </Cell>
      <Cell $h={55} />
      <Cell $h={55} />

      <Cell $h={55} $left={30} $top={18} $shade>
        <Label htmlFor="receiverCountry">收货人国家代码</Label><Field id="receiverCountry" $w={175} $gap={7} />
      </Cell>
      <Cell $h={55} $left={27} $top={16} $shade>
        <Label htmlFor="receiver">收货人</Label><Choice id="receiver" value="9999" w={64} h={24} gap={29} />
        <Field aria-label="收货人代码" $w={145} $gap={12} />
      </Cell>
      <Cell $h={55} $left={44} $top={16} $shade>
        <Label htmlFor="receiverName">收货人名称</Label><Field id="receiverName" $w={175} $gap={16} />
      </Cell>
      <Cell $h={55} $left={48} $top={16} $shade>
        <Label htmlFor="receiverAddr">收货人地址</Label><Field id="receiverAddr" $w={196} $gap={16} />
      </Cell>

      <Cell $h={55} $left={35} $top={16}>
        <Label htmlFor="contact2">通讯方式</Label><Choice id="contact2" value="电话" w={65} gap={6} />
        <Field aria-label="收货人通讯号码" $w={155} $gap={13} />
      </Cell>
      <Cell $h={55} $left={139} $top={16}><Field aria-label="收货人AEO编码" $w={175} /></Cell>
      <Cell $h={55} />
      <Cell $h={55} />
    </FormGrid>
  );
}

export default function App() {
  return (
    <Frame>
      <Global />
      <Toolbars />
      <Workspace>
        <LeftPanels />
        <Editor>
          <Tabs>
            {tabs.map((t, i) => (
              <Tab key={i} $on={i === 4}>{t}<button aria-label="关闭"><Cross /></button></Tab>
            ))}
          </Tabs>
          <CanvasGrid>
            <span />
            <RulerX />
            <RulerY />
            <Canvas>
              <Board>
                <Banner>
                  <Emblem />
                  <Brand><strong>涵谷科技</strong><small>Hango Technology Co.,Ltd.</small></Brand>
                  <Product>涵谷海运舱单平台</Product>
                  <Account>
                    <svg width="13" height="20" viewBox="0 0 13 20" fill="none" stroke="#dceafb" strokeWidth="1.600">
                      <ellipse cx="6.500" cy="5.500" rx="4" ry="4.700" /><path d="M1 20V16Q1 12.500 4 12.500H9Q12 12.500 12 16V20" />
                    </svg>
                    admin
                    <button aria-label="退出">
                      <svg width="15" height="20" viewBox="0 0 15 20" fill="none" stroke="#dceafb" strokeWidth="1.500">
                        <path d="M5 3.500A6.500 8 0 1 0 10 3.500M7.500 0V9" />
                      </svg>
                    </button>
                  </Account>
                </Banner>
                <BoardBody>
                  <Band $h={44} $left={13} $down={6}>
                    <Picture />
                    <BandTitle $gap={14}>集装信息检索</BandTitle>
                    <Label htmlFor="dock" $gap={81} $bold>码头</Label>
                    <Choice id="dock" value="南沙" w={77} gap={12} />
                  </Band>
                  <Band $h={37} $left={87} $boxed $down={2}>
                    <Label htmlFor="box" $bold>集装箱号</Label>
                    <Field id="box" $w={187} $gap={19} $strong />
                    <Label htmlFor="load-type" $gap={88} $bold>整/拼箱</Label>
                    <Choice id="load-type" value="整箱" w={77} gap={6} />
                    <Label as="span" $gap={187}>舱位公司航次号：</Label>
                    <Label as="span" $gap={161}>截单时间：</Label>
                  </Band>
                  <Band $h={38} $left={13} $up={4}>
                    <Picture />
                    <BandTitle $gap={19}>运输工具信息</BandTitle>
                  </Band>
                  <TransportForm />
                  <YellowStrip>
                    {patches.map(([w, h, gap, top], i) => <YellowPatch key={i} $w={w} $h={h} $gap={gap} $top={top} />)}
                  </YellowStrip>
                  <Band $h={32} $left={34} $up={2}>
                    <Picture />
                    <BandTitle $gap={30}>提单信息</BandTitle>
                    <Label as="span" $gap={18} $dark>代码区间：</Label>
                    <Label as="span" $gap={48} $dark>—</Label>
                  </Band>
                  <BillForm />
                </BoardBody>
              </Board>
              <Offstage>
                <Dialog $h={404} $after={132}><header>船代</header><input aria-label="船代" /></Dialog>
                <Dialog $h={400}><header>代码</header><textarea aria-label="代码" /></Dialog>
              </Offstage>
            </Canvas>
          </CanvasGrid>
        </Editor>
      </Workspace>
    </Frame>
  );
}
